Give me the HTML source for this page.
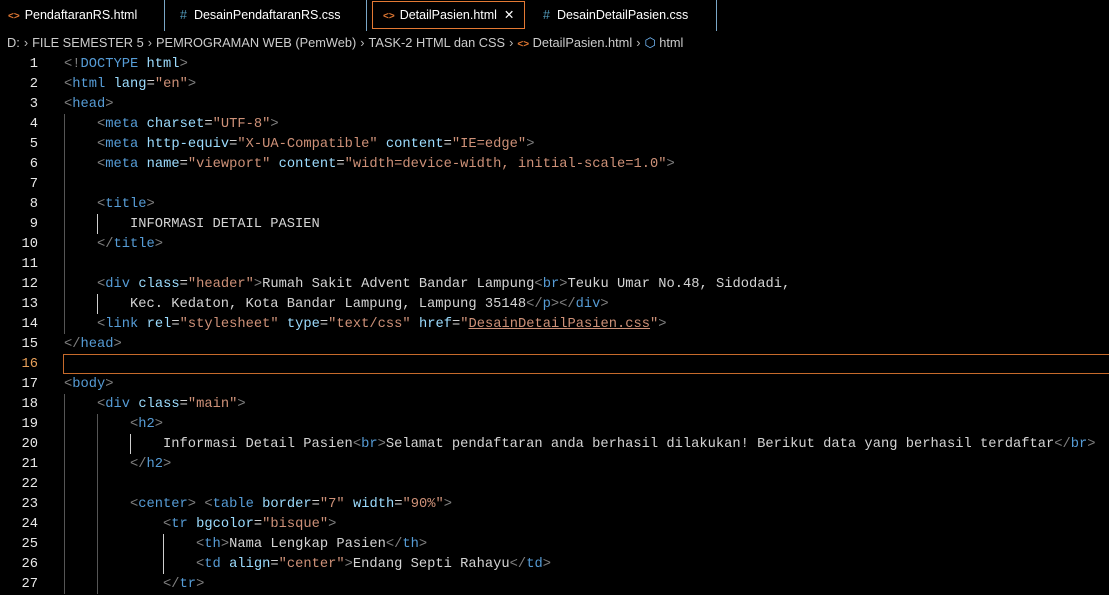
<!DOCTYPE html>
<html><head><style>
*{margin:0;padding:0;box-sizing:border-box}
body{width:1109px;height:593px;background:#000;overflow:hidden;font-family:"Liberation Sans",sans-serif;color:#d4d4d4;position:relative}
.tabs{position:absolute;top:0;left:0;width:1109px;height:31px;background:#000}
.tab{position:absolute;top:0;height:31px;border-right:1px solid #7aa7c7;font-size:12.5px;color:#fff;line-height:30px;padding-left:7px;white-space:nowrap;overflow:hidden}
.tab .h{color:#e37933;font-size:10px;margin-right:5px;font-weight:bold}
.tab .c{color:#519aba;margin-right:7px}
.act{border:1px solid #e37933;top:1px;height:28px;line-height:26px}
.bc{position:absolute;top:33px;left:0;height:20px;font-size:12.8px;color:#ccc;line-height:20px;padding-left:7px;white-space:nowrap}
.bc .sp{margin:0 4px;color:#bbb}
.code{position:absolute;top:55px;left:0;font-family:"Liberation Mono",monospace;font-size:13.75px}
.l{height:20px;line-height:20px;position:relative;white-space:pre}
.n{display:inline-block;width:38px;text-align:right;color:#e8e8e8;margin-right:26px}
.p{color:#808080}.t{color:#569cd6}.a{color:#9cdcfe}.s{color:#ce9178}
.hl{position:absolute;left:63px;top:354px;width:1050px;height:20px;border:1px solid #c66a2b}
.g{position:absolute;width:1px;background:#cfcfcf}
</style></head><body>
<div class="tabs">
<div class="tab" style="left:0;width:165px;padding-left:8px"><span class="h">&lt;&gt;</span>PendaftaranRS.html</div>
<div class="tab" style="left:165px;width:202px;padding-left:15px"><span class="c">#</span>DesainPendaftaranRS.css</div>
<div class="tab act" style="left:372px;width:153px;padding-left:10px"><span class="h">&lt;&gt;</span>DetailPasien.html &nbsp;✕</div>
<div class="tab" style="left:527px;width:190px;padding-left:16px"><span class="c">#</span>DesainDetailPasien.css</div>
</div>
<div class="bc">D:<span class="sp">›</span>FILE SEMESTER 5<span class="sp">›</span>PEMROGRAMAN WEB (PemWeb)<span class="sp">›</span>TASK-2 HTML dan CSS<span class="sp">›</span><span style="color:#e37933;font-size:10px;font-weight:bold">&lt;&gt;</span> DetailPasien.html<span class="sp">›</span><span style="color:#75beff">⬡</span> html</div>
<div class="hl"></div>
<div class="g" style="left:97px;top:214px;height:20px"></div>
<div class="g" style="left:97px;top:294px;height:20px"></div>
<div class="g" style="left:64px;top:114px;height:220px;background:#555"></div>
<div class="g" style="left:64px;top:394px;height:200px;background:#555"></div>
<div class="g" style="left:97px;top:414px;height:180px;background:#555"></div>
<div class="g" style="left:130px;top:434px;height:20px"></div>
<div class="g" style="left:163px;top:534px;height:40px"></div>
<div class="code"><div class="l"><span class="n">1</span><span class="p">&lt;!</span><span class="t">DOCTYPE</span> <span class="a">html</span><span class="p">&gt;</span></div><div class="l"><span class="n">2</span><span class="p">&lt;</span><span class="t">html</span> <span class="a">lang</span>=<span class="s">"en"</span><span class="p">&gt;</span></div><div class="l"><span class="n">3</span><span class="p">&lt;</span><span class="t">head</span><span class="p">&gt;</span></div><div class="l"><span class="n">4</span>    <span class="p">&lt;</span><span class="t">meta</span> <span class="a">charset</span>=<span class="s">"UTF-8"</span><span class="p">&gt;</span></div><div class="l"><span class="n">5</span>    <span class="p">&lt;</span><span class="t">meta</span> <span class="a">http-equiv</span>=<span class="s">"X-UA-Compatible"</span> <span class="a">content</span>=<span class="s">"IE=edge"</span><span class="p">&gt;</span></div><div class="l"><span class="n">6</span>    <span class="p">&lt;</span><span class="t">meta</span> <span class="a">name</span>=<span class="s">"viewport"</span> <span class="a">content</span>=<span class="s">"width=device-width, initial-scale=1.0"</span><span class="p">&gt;</span></div><div class="l"><span class="n">7</span></div><div class="l"><span class="n">8</span>    <span class="p">&lt;</span><span class="t">title</span><span class="p">&gt;</span></div><div class="l"><span class="n">9</span>        INFORMASI DETAIL PASIEN</div><div class="l"><span class="n">10</span>    <span class="p">&lt;/</span><span class="t">title</span><span class="p">&gt;</span></div><div class="l"><span class="n">11</span></div><div class="l"><span class="n">12</span>    <span class="p">&lt;</span><span class="t">div</span> <span class="a">class</span>=<span class="s">"header"</span><span class="p">&gt;</span>Rumah Sakit Advent Bandar Lampung<span class="p">&lt;</span><span class="t">br</span><span class="p">&gt;</span>Teuku Umar No.48, Sidodadi,</div><div class="l"><span class="n">13</span>        Kec. Kedaton, Kota Bandar Lampung, Lampung 35148<span class="p">&lt;/</span><span class="t">p</span><span class="p">&gt;&lt;/</span><span class="t">div</span><span class="p">&gt;</span></div><div class="l"><span class="n">14</span>    <span class="p">&lt;</span><span class="t">link</span> <span class="a">rel</span>=<span class="s">"stylesheet"</span> <span class="a">type</span>=<span class="s">"text/css"</span> <span class="a">href</span>=<span class="s">"<u>DesainDetailPasien.css</u>"</span><span class="p">&gt;</span></div><div class="l"><span class="n">15</span><span class="p">&lt;/</span><span class="t">head</span><span class="p">&gt;</span></div><div class="l"><span class="n" style="color:#e8a05a">16</span></div><div class="l"><span class="n">17</span><span class="p">&lt;</span><span class="t">body</span><span class="p">&gt;</span></div><div class="l"><span class="n">18</span>    <span class="p">&lt;</span><span class="t">div</span> <span class="a">class</span>=<span class="s">"main"</span><span class="p">&gt;</span></div><div class="l"><span class="n">19</span>        <span class="p">&lt;</span><span class="t">h2</span><span class="p">&gt;</span></div><div class="l"><span class="n">20</span>            Informasi Detail Pasien<span class="p">&lt;</span><span class="t">br</span><span class="p">&gt;</span>Selamat pendaftaran anda berhasil dilakukan! Berikut data yang berhasil terdaftar<span class="p">&lt;/</span><span class="t">br</span><span class="p">&gt;</span></div><div class="l"><span class="n">21</span>        <span class="p">&lt;/</span><span class="t">h2</span><span class="p">&gt;</span></div><div class="l"><span class="n">22</span></div><div class="l"><span class="n">23</span>        <span class="p">&lt;</span><span class="t">center</span><span class="p">&gt;</span> <span class="p">&lt;</span><span class="t">table</span> <span class="a">border</span>=<span class="s">"7"</span> <span class="a">width</span>=<span class="s">"90%"</span><span class="p">&gt;</span></div><div class="l"><span class="n">24</span>            <span class="p">&lt;</span><span class="t">tr</span> <span class="a">bgcolor</span>=<span class="s">"bisque"</span><span class="p">&gt;</span></div><div class="l"><span class="n">25</span>                <span class="p">&lt;</span><span class="t">th</span><span class="p">&gt;</span>Nama Lengkap Pasien<span class="p">&lt;/</span><span class="t">th</span><span class="p">&gt;</span></div><div class="l"><span class="n">26</span>                <span class="p">&lt;</span><span class="t">td</span> <span class="a">align</span>=<span class="s">"center"</span><span class="p">&gt;</span>Endang Septi Rahayu<span class="p">&lt;/</span><span class="t">td</span><span class="p">&gt;</span></div><div class="l"><span class="n">27</span>            <span class="p">&lt;/</span><span class="t">tr</span><span class="p">&gt;</span></div></div>
</body></html>
